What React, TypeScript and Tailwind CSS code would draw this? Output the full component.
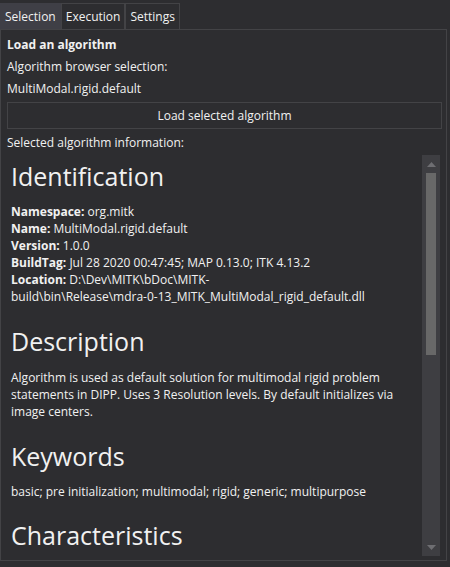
import React from "react";

const font = { fontFamily: '"Open Sans", "Noto Sans", sans-serif' };

function Tab({ label, active }: { label: string; active?: boolean }) {
  return (
    <div
      className={
        "h-[26px] flex items-center px-[4px] text-[12px] border border-b-0 " +
        (active ? "bg-[#3f3f46] border-[#3f3f46]" : "bg-[#2d2d30] border-[#434346]")
      }
    >
      {label}
    </div>
  );
}

function Field({ k, v }: { k: string; v: string }) {
  return (
    <div>
      <span className="font-bold">{k}</span> {v}
    </div>
  );
}

export default function App() {
  return (
    <div
      className="w-[450px] h-[567px] bg-[#2d2d30] text-[#f1f1f1] overflow-hidden flex flex-col"
      style={font}
    >
      <div className="flex pt-[3px] shrink-0">
        <Tab label="Selection" active />
        <Tab label="Execution" />
        <Tab label="Settings" />
      </div>
      <div className="w-[447px] h-[532px] shrink-0 border border-[#434346] flex flex-col px-[6px]">
        <div className="text-[12px] leading-[22px] pt-[4px] shrink-0">
          <div className="font-bold">Load an algorithm</div>
          <div>Algorithm browser selection:</div>
          <div>MultiModal.rigid.default</div>
        </div>
        <div className="shrink-0 mt-[2px] h-[27px] w-[435px] border border-[#434346] flex items-center justify-center text-[12px]">
          Load selected algorithm
        </div>
        <div className="shrink-0 text-[12px] leading-[22px] mt-[3px]">Selected algorithm information:</div>
        <div className="flex flex-1 min-h-0 mb-[4px] mt-[1px] -ml-[2px]">
          <div className="flex-1 pl-[6px] pt-[4px] overflow-hidden">
            <div className="text-[25px] leading-[34px]">Identification</div>
            <div className="text-[12px] leading-[17px] mt-[10px]">
              <Field k="Namespace:" v="org.mitk" />
              <Field k="Name:" v="MultiModal.rigid.default" />
              <Field k="Version:" v="1.0.0" />
              <Field k="BuildTag:" v="Jul 28 2020 00:47:45; MAP 0.13.0; ITK 4.13.2" />
              <div>
                <span className="font-bold">Location:</span> D:\Dev\MITK\bDoc\MITK-
                <br />
                build\bin\Release\mdra-0-13_MITK_MultiModal_rigid_default.dll
              </div>
            </div>
            <div className="text-[25px] leading-[34px] mt-[19px]">Description</div>
            <div className="text-[12px] leading-[17px] mt-[11px]">
              Algorithm is used as default solution for multimodal rigid problem
              <br />
              statements in DIPP. Uses 3 Resolution levels. By default initializes via
              <br />
              image centers.
            </div>
            <div className="text-[25px] leading-[34px] mt-[19px]">Keywords</div>
            <div className="text-[12px] leading-[17px] mt-[10px]">
              basic; pre initialization; multimodal; rigid; generic; multipurpose
            </div>
            <div className="text-[25px] leading-[34px] mt-[18px]">Characteristics</div>
          </div>
          <div className="w-[18px] shrink-0 bg-[#3e3e42] flex flex-col items-center">
            <div className="h-[18px] flex items-center justify-center">
              <svg width="9" height="5" viewBox="0 0 9 5">
                <path d="M4.5 0 L9 5 L0 5 Z" fill="#6e6e72" />
              </svg>
            </div>
            <div className="w-[10px] h-[182px] bg-[#686868]" />
            <div className="flex-1" />
            <div className="h-[18px] flex items-center justify-center">
              <svg width="9" height="5" viewBox="0 0 9 5">
                <path d="M0 0 L9 0 L4.5 5 Z" fill="#6e6e72" />
              </svg>
            </div>
          </div>
        </div>
      </div>
    </div>
  );
}
